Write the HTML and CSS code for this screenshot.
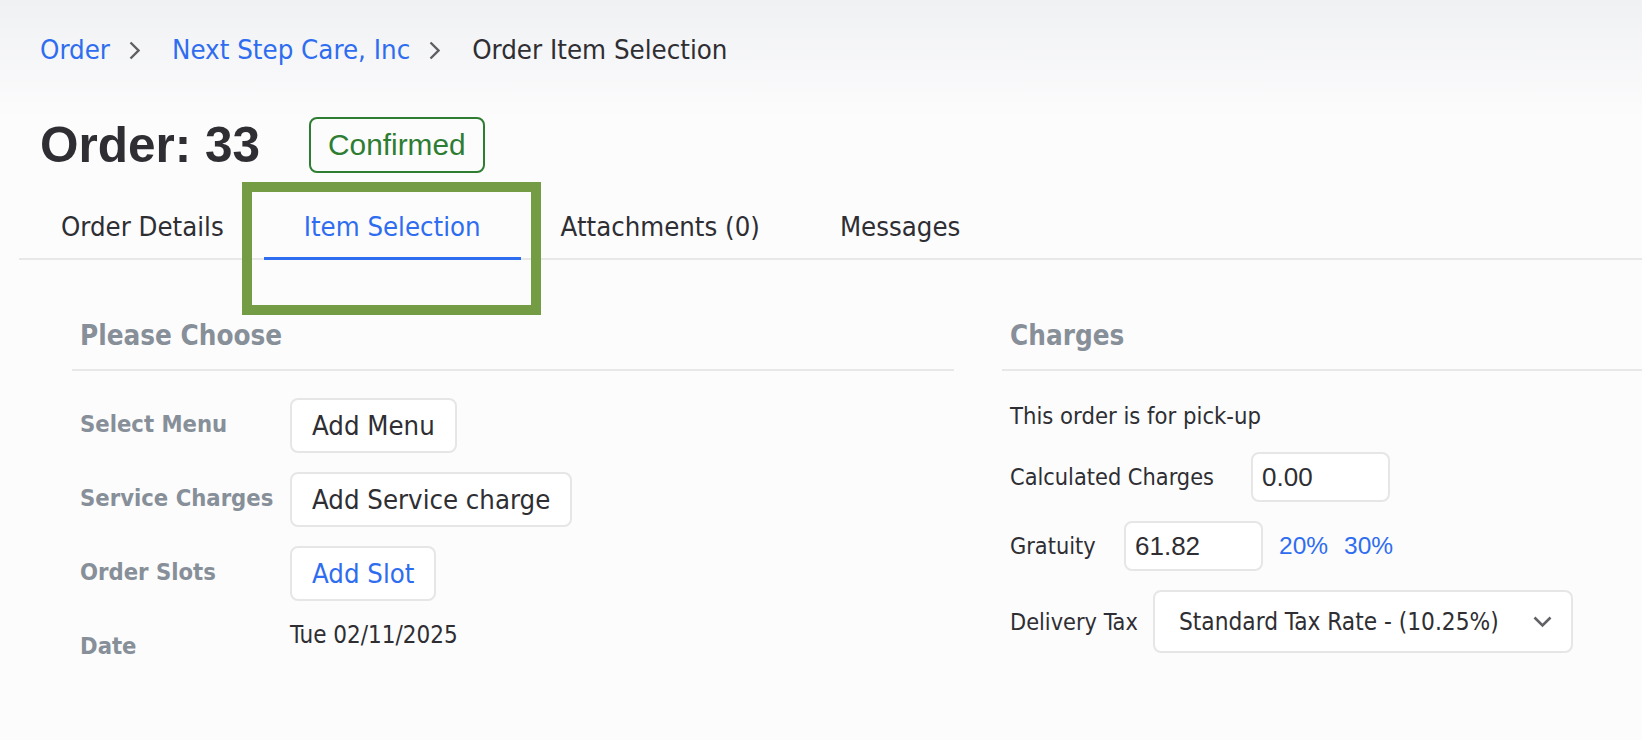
FILE: index.html
```html
<!DOCTYPE html>
<html lang="en">
<head>
    <meta charset="UTF-8">
    <meta name="viewport" content="width=device-width, initial-scale=1.0">
    <title>Order Item Selection</title>
    <link rel="stylesheet" href="styles.css">
</head>
<body>
    <div class="page">
        <nav class="breadcrumb">
            <a href="#">Order</a>
            <svg class="crumb-sep" width="11" height="19" viewBox="0 0 11 19"><path d="M1.5 1.5 L9.5 9.5 L1.5 17.5" fill="none" stroke="#5f5f63" stroke-width="2.4"/></svg>
            <a href="#">Next Step Care, Inc</a>
            <svg class="crumb-sep" width="11" height="19" viewBox="0 0 11 19"><path d="M1.5 1.5 L9.5 9.5 L1.5 17.5" fill="none" stroke="#5f5f63" stroke-width="2.4"/></svg>
            <span class="current">Order Item Selection</span>
        </nav>

        <div class="title-row">
            <h1>Order: 33</h1>
            <span class="badge">Confirmed</span>
        </div>

        <ul class="tabs">
            <li class="tab">Order Details</li>
            <li class="tab active">Item Selection</li>
            <li class="tab">Attachments (0)</li>
            <li class="tab">Messages</li>
        </ul>

        <div class="content">
            <section class="panel">
                <h2 class="panel-title">Please Choose</h2>
                <div class="form-row">
                    <div class="row-label">Select Menu</div>
                    <button class="btn">Add Menu</button>
                </div>
                <div class="form-row">
                    <div class="row-label">Service Charges</div>
                    <button class="btn">Add Service charge</button>
                </div>
                <div class="form-row">
                    <div class="row-label">Order Slots</div>
                    <button class="btn btn-link">Add Slot</button>
                </div>
                <div class="form-row">
                    <div class="row-label">Date</div>
                    <div class="row-value">Tue 02/11/2025</div>
                </div>
            </section>

            <section class="panel">
                <h2 class="panel-title">Charges</h2>
                <p class="note">This order is for pick-up</p>
                <div class="charge-row">
                    <label class="charge-label label-calc">Calculated Charges</label>
                    <input class="num-input" type="text" value="0.00">
                </div>
                <div class="charge-row">
                    <label class="charge-label label-grat">Gratuity</label>
                    <input class="num-input" type="text" value="61.82">
                    <a href="#" class="pct">20%</a>
                    <a href="#" class="pct">30%</a>
                </div>
                <div class="charge-row">
                    <label class="charge-label label-tax">Delivery Tax</label>
                    <div class="select">
                        <span>Standard Tax Rate - (10.25%)</span>
                        <svg width="19" height="12" viewBox="0 0 19 12"><path d="M1.5 1.5 L9.5 9.5 L17.5 1.5" fill="none" stroke="#626266" stroke-width="2.6"/></svg>
                    </div>
                </div>
            </section>
        </div>

        <!-- highlight frame from the screenshot annotation -->
        <div class="highlight"></div>
    </div>
</body>
</html>
```

FILE: styles.css
```css
body {
    margin: 0;
    font-family: "DejaVu Sans Condensed", "DejaVu Sans", sans-serif;
    color: #2e2e33;
    background: linear-gradient(#f0f1f3 0, #fcfcfd 120px) no-repeat, #fcfcfd;
    min-height: 740px;
}

.page {
    position: relative;
    padding-left: 19px;
}

a {
    color: #2f6df0;
    text-decoration: none;
}

/* Breadcrumb */
.breadcrumb {
    display: flex;
    align-items: center;
    padding: 32px 0 0 21px;
    font-size: 27.4px;
    line-height: 36px;
}

.crumb-sep {
    margin: 0 32px 0 19px;
}

.breadcrumb .current {
    color: #2e2e33;
}

/* Title */
.title-row {
    display: flex;
    align-items: center;
    margin-top: 47px;
    padding-left: 21px;
}

h1 {
    margin: 0;
    font-family: "Liberation Sans", Arial, sans-serif;
    font-size: 49.5px;
    line-height: 59px;
    font-weight: bold;
    color: #2e2e33;
}

.badge {
    margin-left: 49px;
    height: 52px;
    line-height: 52px;
    padding: 0 17px;
    border: 2px solid #2e7d32;
    border-radius: 8px;
    color: #2e7d32;
    font-family: "Liberation Sans", Arial, sans-serif;
    font-size: 29.8px;
}

/* Tabs */
.tabs {
    display: flex;
    list-style: none;
    margin: 24px 0 0;
    padding: 0 0 0 2px;
    border-bottom: 2px solid #e8e8e8;
}

.tab {
    padding: 11px 40px 12px;
    margin-bottom: -2px;
    font-size: 27.3px;
    line-height: 36px;
    border-bottom: 3px solid transparent;
    color: #2e2e33;
}

.tab.active {
    color: #2f6df0;
    border-bottom-color: #2f6df0;
}

/* Content */
.content {
    display: grid;
    grid-template-columns: 882px 1fr;
    gap: 48px;
    margin-top: 58px;
    padding-left: 53px;
}

.panel-title {
    margin: 0;
    padding: 0 0 15px 8px;
    border-bottom: 2px solid #e8e8e8;
    font-size: 27.6px;
    line-height: 36px;
    font-weight: bold;
    color: #878f99;
}

.form-row {
    display: flex;
    align-items: flex-start;
    margin-top: 19px;
}

.form-row:first-of-type {
    margin-top: 27px;
}

.row-label {
    width: 218px;
    padding: 11px 0 0 8px;
    box-sizing: border-box;
    font-size: 23.6px;
    line-height: 30px;
    font-weight: bold;
    color: #878f99;
}

.btn {
    height: 55px;
    padding: 0 20px;
    background: #fff;
    border: 2px solid #e6e6e6;
    border-radius: 8px;
    font-family: inherit;
    font-size: 27.3px;
    color: #2e2e33;
}

.btn-link {
    color: #2f6df0;
}

.row-value {
    font-size: 24px;
    line-height: 30px;
    color: #2e2e33;
}

/* Charges */
.note {
    margin: 30px 0 0;
    padding-left: 8px;
    font-size: 23.6px;
    line-height: 30px;
}

.charge-row {
    display: flex;
    align-items: center;
    margin-top: 19px;
    padding-left: 8px;
}

.note + .charge-row {
    margin-top: 21px;
}

.charge-label {
    font-size: 23.3px;
    line-height: 30px;
}

.label-calc { width: 241px; }
.label-grat { width: 114px; }
.label-tax { width: 143px; }

.num-input {
    width: 139px;
    height: 50px;
    box-sizing: border-box;
    padding: 0 9px;
    background: #fff;
    border: 2px solid #e6e6e6;
    border-radius: 8px;
    font-family: "Liberation Sans", Arial, sans-serif;
    font-size: 26px;
    color: #2e2e33;
}

.pct {
    margin-left: 16px;
    font-family: "Liberation Sans", Arial, sans-serif;
    font-size: 24.5px;
}

.select {
    display: flex;
    align-items: center;
    justify-content: space-between;
    width: 420px;
    height: 63px;
    box-sizing: border-box;
    padding: 0 19px 0 24px;
    background: #fff;
    border: 2px solid #e6e6e6;
    border-radius: 8px;
    font-size: 24.2px;
}

/* annotation frame */
.highlight {
    position: absolute;
    left: 242px;
    top: 182px;
    width: 279px;
    height: 113px;
    border: 10px solid #749c45;
}
```
